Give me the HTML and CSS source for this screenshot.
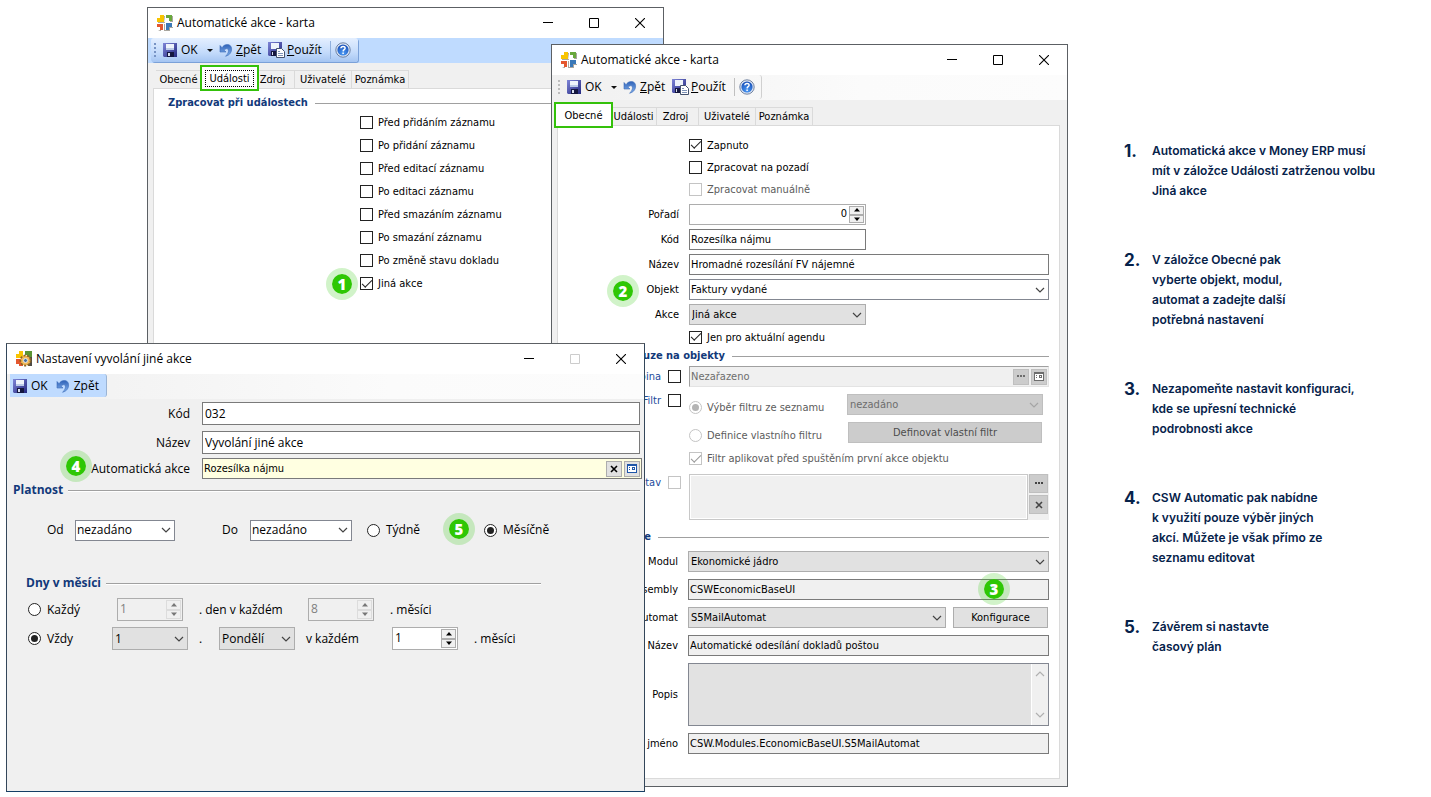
FILE: index.html
```html
<!DOCTYPE html>
<html lang="cs">
<head>
<meta charset="utf-8">
<title>Automatické akce</title>
<link rel="stylesheet" href="styles.css">
</head>
<body>
<svg class="defs" aria-hidden="true">
  <defs>
    <linearGradient id="gblue" x1="0" y1="0" x2="1" y2="1"><stop offset="0" stop-color="#7f86d8"/><stop offset="1" stop-color="#23277f"/></linearGradient>
    <linearGradient id="gundo" x1="0" y1="0" x2="0" y2="1"><stop offset="0" stop-color="#2f62b8"/><stop offset="1" stop-color="#86b4ee"/></linearGradient>
    <radialGradient id="ghelp" cx=".5" cy=".8" r=".8"><stop offset="0" stop-color="#4d9bf5"/><stop offset="1" stop-color="#154bb5"/></radialGradient>
    <symbol id="logo" viewBox="0 0 16 16">
      <path fill="#a9a69f" d="M7 1h1v6H1v1h7zM15 1h1v6h-3V6h2zM1 15h2v-1h1v2h3V9h1v7H3zM8 15h4v-3h4v1h-3v3H8z"/>
      <path fill="#f8c400" d="M3 0h4v7H0V3h3z"/><path fill="#69a83c" d="M9 0h6v6h-3V3H9z"/>
      <path fill="#e4572e" d="M0 9h6v6H3v-3H0z"/><path fill="#3a78b8" d="M9 8h6v4h-3v3H9z"/>
    </symbol>
    <symbol id="logogear" viewBox="0 0 16 16">
      <path fill="#f8c400" d="M3 0h4v7H0V3h3z"/><path fill="#5a9434" d="M9 0h7v8h-4V4H9z"/>
      <path fill="#e4572e" d="M0 8h7v7H3v-2H0z"/><path fill="#4d4a45" d="M12 6h4v9h-4z"/>
      <circle cx="9.500" cy="9.500" r="5" fill="#eeb04a" stroke="#8a6422" stroke-width="2" stroke-dasharray="2 1.500"/>
      <circle cx="9.500" cy="9.500" r="4" fill="#f1bb5d"/><circle cx="9.500" cy="9.500" r="2" fill="#4a6f9c" stroke="#dfe7ef"/>
    </symbol>
    <symbol id="save" viewBox="0 0 14 14">
      <path fill="url(#gblue)" d="M0 0h14v14H1l-1-1z"/><path fill="#eef3fb" d="M3 1h8v6H3z"/><path fill="#bccbe8" d="M3 5h8v2H3z"/>
      <path fill="#15173f" d="M4 9h7v5H4z"/><path fill="#d8def0" d="M5 10h2v3H5z"/>
    </symbol>
    <symbol id="apply" viewBox="0 0 17 16">
      <path fill="url(#gblue)" d="M0 0h14v14H1l-1-1z"/><path fill="#eef3fb" d="M3 1h8v6H3z"/><path fill="#15173f" d="M3 9h5v5H3z"/><path fill="#d8def0" d="M4 10h1v3H4z"/>
      <path fill="#fff" stroke="#44526e" d="M8.500 6.500h5l3 3v6h-8z"/><path stroke="#7f93b8" d="M10 9.500h2M10 11.500h5M10 13.500h5" fill="none"/>
    </symbol>
    <symbol id="undo" viewBox="0 0 14 14">
      <path fill="url(#gundo)" stroke="#3c6cb8" stroke-width=".6" d="M1 2.500V9h6L5.200 7.200C6.300 5.500 8.900 5 9.400 7.200c.4 2-.9 4.100-2.800 6.100 4.200-1.300 6-4 6-7.400C12.600 3.200 10.800 1.500 8.300 1.500 6 1.500 4.200 2.700 3.100 4.700z"/>
    </symbol>
    <symbol id="help" viewBox="0 0 16 16">
      <circle cx="8" cy="8" r="7.200" fill="#dce6f4" stroke="#56688c" stroke-width=".8"/><circle cx="8" cy="8" r="5.600" fill="url(#ghelp)"/>
      <path d="M5.900 6.300c.2-2.600 4.400-2.400 4.200 0C10 7.700 8.200 7.700 8.100 9.400M8.100 10.400v1.600" fill="none" stroke="#fff" stroke-width="1.500"/>
    </symbol>
    <symbol id="chev" viewBox="0 0 10 6"><path d="M1 1l4 4 4-4" fill="none" stroke="currentColor" stroke-width="1.200"/></symbol>
    <symbol id="tri" viewBox="0 0 6 4"><path d="M0 3.500L3 0l3 3.500z" fill="currentColor"/></symbol>
    <symbol id="cross" viewBox="0 0 8 8"><path d="M1 1l6 6M7 1L1 7" stroke="currentColor" stroke-width="1.600"/></symbol>
    <symbol id="dots" viewBox="0 0 10 3"><path d="M1 0h2v2H1zM4 0h2v2H4zM7 0h2v2H7z" fill="currentColor"/></symbol>
    <symbol id="card" viewBox="0 0 10 9"><path fill="currentColor" d="M0 0h10v9H0z"/><path fill="#fff" d="M1 2h8v6H1z"/><path fill="currentColor" d="M2 3h1v1H2zM2 5h1v1H2zM5 3h3v3H5z"/><path fill="#fff" d="M6 4h1v1H6z"/></symbol>
    <symbol id="min" viewBox="0 0 10 10"><path d="M0 4.500h10" stroke="currentColor"/></symbol>
    <symbol id="max" viewBox="0 0 10 10"><path d="M.5.5h9v9h-9z" fill="none" stroke="currentColor"/></symbol>
    <symbol id="close" viewBox="0 0 10 10"><path d="M0 0l10 10M10 0L0 10" stroke="currentColor" stroke-width="1.100"/></symbol>
  </defs>
</svg>
<div class="page">
  <main class="desktop">

    <section class="window window-events">
      <header class="titlebar">
        <svg class="i16"><use href="#logo"/></svg><h1>Automatické akce - karta</h1>
        <button class="sys" aria-label="Minimalizovat"><svg><use href="#min"/></svg></button>
        <button class="sys" aria-label="Maximalizovat"><svg><use href="#max"/></svg></button>
        <button class="sys" aria-label="Zavřít"><svg><use href="#close"/></svg></button>
      </header>
      <div class="toolbar toolbar-blue">
        <div class="tools">
          <i class="grip"></i>
          <button class="tool tool-ok"><svg class="i14"><use href="#save"/></svg>OK</button>
          <button class="drop" aria-label="Další možnosti"></button>
          <button class="tool tool-back"><svg class="i14"><use href="#undo"/></svg><span><u>Z</u>pět</span></button>
          <button class="tool tool-apply"><svg class="i17"><use href="#apply"/></svg><span><u>P</u>oužít</span></button>
          <i class="sep"></i>
          <button class="tool" aria-label="Nápověda"><svg class="i16"><use href="#help"/></svg></button>
        </div>
      </div>
      <nav class="tabs">
        <button class="tab tab-s">Obecné</button><button class="tab tab-on tab-focus"><span>Události</span></button><button class="tab tab-xs">Zdroj</button><button class="tab tab-m">Uživatelé</button><button class="tab tab-m">Poznámka</button>
      </nav>
      <div class="panel">
        <h2 class="group-title first"><span>Zpracovat při událostech</span></h2>
        <div class="events">
          <label class="check"><input type="checkbox">Před přidáním záznamu</label>
          <label class="check"><input type="checkbox">Po přidání záznamu</label>
          <label class="check"><input type="checkbox">Před editací záznamu</label>
          <label class="check"><input type="checkbox">Po editaci záznamu</label>
          <label class="check"><input type="checkbox">Před smazáním záznamu</label>
          <label class="check"><input type="checkbox">Po smazání záznamu</label>
          <label class="check"><input type="checkbox">Po změně stavu dokladu</label>
          <label class="check"><input type="checkbox" checked>Jiná akce</label>
        </div>
      </div>
    </section>

    <section class="window window-general">
      <header class="titlebar">
        <svg class="i16"><use href="#logo"/></svg><h1>Automatické akce - karta</h1>
        <button class="sys" aria-label="Minimalizovat"><svg><use href="#min"/></svg></button>
        <button class="sys" aria-label="Maximalizovat"><svg><use href="#max"/></svg></button>
        <button class="sys" aria-label="Zavřít"><svg><use href="#close"/></svg></button>
      </header>
      <div class="toolbar">
        <div class="tools">
          <i class="grip"></i>
          <button class="tool tool-ok"><svg class="i14"><use href="#save"/></svg>OK</button>
          <button class="drop" aria-label="Další možnosti"></button>
          <button class="tool tool-back"><svg class="i14"><use href="#undo"/></svg><span><u>Z</u>pět</span></button>
          <button class="tool tool-apply"><svg class="i17"><use href="#apply"/></svg><span><u>P</u>oužít</span></button>
          <i class="sep"></i>
          <button class="tool" aria-label="Nápověda"><svg class="i16"><use href="#help"/></svg></button>
        </div>
      </div>
      <nav class="tabs tabs-flush">
        <button class="tab tab-on"><span>Obecné</span></button><button class="tab tab-s">Události</button><button class="tab tab-z">Zdroj</button><button class="tab tab-m">Uživatelé</button><button class="tab tab-m">Poznámka</button>
      </nav>
      <div class="panel">
        <div class="flags">
          <label class="check"><input type="checkbox" checked>Zapnuto</label>
          <label class="check"><input type="checkbox">Zpracovat na pozadí</label>
          <label class="check"><input type="checkbox" disabled>Zpracovat manuálně</label>
        </div>
        <div class="form">
          <label class="name" for="order">Pořadí</label>
          <div class="spin narrow"><input id="order" class="num-right" value="0"><span class="updown"><button aria-label="Více"><svg><use href="#tri"/></svg></button><button aria-label="Méně"><svg><use href="#tri"/></svg></button></span></div>
          <label class="name" for="code">Kód</label><input id="code" class="field narrow" value="Rozesílka nájmu">
          <label class="name" for="title">Název</label><input id="title" class="field" value="Hromadné rozesílání FV nájemné">
          <label class="name" for="object">Objekt</label>
          <div class="combo white"><select id="object"><option>Faktury vydané</option></select><svg><use href="#chev"/></svg></div>
          <label class="name" for="action">Akce</label>
          <div class="combo narrow"><select id="action"><option>Jiná akce</option></select><svg><use href="#chev"/></svg></div>
        </div>
        <label class="check check-agenda"><input type="checkbox" checked>Jen pro aktuální agendu</label>
        <h2 class="group-title objects"><span>Omezit pouze na objekty</span></h2>
        <div class="form filter">
          <label class="name name-check">Skupina<input type="checkbox"></label>
          <div class="lookup off"><input aria-label="Skupina" value="Nezařazeno" disabled><button aria-label="Vybrat" disabled><svg class="i10"><use href="#dots"/></svg></button><button aria-label="Karta" disabled><svg class="i10"><use href="#card"/></svg></button></div>
          <label class="name name-check name-top">Filtr<input type="checkbox"></label>
          <div class="filter-body">
            <label class="check"><input type="radio" name="f" checked disabled>Výběr filtru ze seznamu</label>
            <div class="combo off"><select aria-label="Filtr" disabled><option>nezadáno</option></select><svg><use href="#chev"/></svg></div>
            <label class="check"><input type="radio" name="f" disabled>Definice vlastního filtru</label>
            <button class="push off" disabled>Definovat vlastní filtr</button>
            <label class="check wide"><input type="checkbox" checked disabled>Filtr aplikovat před spuštěním první akce objektu</label>
          </div>
          <label class="name name-check name-state">Stav<input type="checkbox" disabled></label>
          <div class="state"><textarea aria-label="Stav" disabled></textarea><span><button aria-label="Vybrat" disabled><svg class="i10"><use href="#dots"/></svg></button><button aria-label="Smazat" disabled><svg class="i8"><use href="#cross"/></svg></button></span></div>
        </div>
        <h2 class="group-title module"><span>Akce</span></h2>
        <div class="form module-form">
          <label class="name" for="module">Modul</label>
          <div class="combo"><select id="module"><option>Ekonomické jádro</option></select><svg><use href="#chev"/></svg></div>
          <label class="name" for="assembly">Assembly</label><input id="assembly" class="field grey" value="CSWEconomicBaseUI" readonly>
          <label class="name" for="automat">Automat</label>
          <div class="pair"><div class="combo"><select id="automat"><option>S5MailAutomat</option></select><svg><use href="#chev"/></svg></div><button class="push">Konfigurace</button></div>
          <label class="name" for="mname">Název</label><input id="mname" class="field grey" value="Automatické odesílání dokladů poštou" readonly>
          <label class="name" for="desc">Popis</label>
          <div class="memo"><textarea id="desc" readonly></textarea><span><svg class="up"><use href="#chev"/></svg><svg><use href="#chev"/></svg></span></div>
          <label class="name" for="full">Celé jméno</label><input id="full" class="field grey" value="CSW.Modules.EconomicBaseUI.S5MailAutomat" readonly>
        </div>
      </div>
    </section>

    <section class="window window-trigger">
      <header class="titlebar">
        <svg class="i16"><use href="#logogear"/></svg><h1>Nastavení vyvolání jiné akce</h1>
        <button class="sys" aria-label="Minimalizovat"><svg><use href="#min"/></svg></button>
        <button class="sys" aria-label="Maximalizovat" disabled><svg><use href="#max"/></svg></button>
        <button class="sys" aria-label="Zavřít"><svg><use href="#close"/></svg></button>
      </header>
      <div class="toolbar">
        <div class="tools tools-plain">
          <button class="tool"><svg class="i14"><use href="#save"/></svg>OK</button>
          <button class="tool"><svg class="i14"><use href="#undo"/></svg>Zpět</button>
        </div>
      </div>
      <div class="trigger-form">
        <label class="name" for="tcode">Kód</label><input id="tcode" class="field" value="032">
        <label class="name" for="tname">Název</label><input id="tname" class="field" value="Vyvolání jiné akce">
      </div>
      <div class="trigger-form trigger-action">
        <label class="name" for="tact">Automatická akce</label>
        <div class="lookup yellow"><input id="tact" value="Rozesílka nájmu"><button aria-label="Smazat"><svg class="i8"><use href="#cross"/></svg></button><button class="card" aria-label="Karta"><svg class="i10"><use href="#card"/></svg></button></div>
      </div>
      <h2 class="group-title validity"><span>Platnost</span></h2>
      <div class="range">
        <label for="from">Od</label><div class="combo white"><select id="from"><option>nezadáno</option></select><svg><use href="#chev"/></svg></div>
        <label for="to">Do</label><div class="combo white"><select id="to"><option>nezadáno</option></select><svg><use href="#chev"/></svg></div>
        <label class="check"><input type="radio" name="p">Týdně</label>
        <label class="check"><input type="radio" name="p" checked>Měsíčně</label>
      </div>
      <h2 class="group-title days"><span>Dny v měsíci</span></h2>
      <div class="schedule every">
        <label class="check"><input type="radio" name="d">Každý</label>
        <div class="spin off"><input aria-label="Den" value="1" disabled><span class="updown"><button aria-label="Více" disabled><svg><use href="#tri"/></svg></button><button aria-label="Méně" disabled><svg><use href="#tri"/></svg></button></span></div>
        <span>. den v každém</span>
        <div class="spin off"><input aria-label="Měsíc" value="8" disabled><span class="updown"><button aria-label="Více" disabled><svg><use href="#tri"/></svg></button><button aria-label="Méně" disabled><svg><use href="#tri"/></svg></button></span></div>
        <span>. měsíci</span>
      </div>
      <div class="schedule always">
        <label class="check"><input type="radio" name="d" checked>Vždy</label>
        <div class="combo"><select aria-label="Pořadí dne"><option>1</option></select><svg><use href="#chev"/></svg></div>
        <span>.</span>
        <div class="combo"><select aria-label="Den v týdnu"><option>Pondělí</option></select><svg><use href="#chev"/></svg></div>
        <span>v každém</span>
        <div class="spin"><input aria-label="Počet měsíců" value="1"><span class="updown"><button aria-label="Více"><svg><use href="#tri"/></svg></button><button aria-label="Méně"><svg><use href="#tri"/></svg></button></span></div>
        <span>. měsíci</span>
      </div>
    </section>

    <b class="badge badge-1">1</b>
    <b class="badge badge-2">2</b>
    <b class="badge badge-3">3</b>
    <b class="badge badge-4">4</b>
    <b class="badge badge-5">5</b>
  </main>

  <aside class="notes">
    <div class="note"><b>1.</b><p>Automatická akce v Money ERP musí<br>mít v záložce Události zatrženou volbu<br>Jiná akce</p></div>
    <div class="note"><b>2.</b><p>V záložce Obecné pak<br>vyberte objekt, modul,<br>automat a zadejte další<br>potřebná nastavení</p></div>
    <div class="note"><b>3.</b><p>Nezapomeňte nastavit konfiguraci,<br>kde se upřesní technické<br>podrobnosti akce</p></div>
    <div class="note"><b>4.</b><p>CSW Automatic pak nabídne<br>k využití pouze výběr jiných<br>akcí. Můžete je však přímo ze<br>seznamu editovat</p></div>
    <div class="note"><b>5.</b><p>Závěrem si nastavte<br>časový plán</p></div>
  </aside>
</div>
</body>
</html>
```
FILE: styles.css
```css
* { box-sizing: border-box; }
body { margin: 0; background: #fff; color: #000; font: 11px/15px "DejaVu Sans Condensed", "Noto Sans", sans-serif; }
button, input, select, textarea { font: inherit; color: inherit; margin: 0; padding: 0; border-radius: 0; outline: 0; min-width: 0; }
button { background: none; border: 0; white-space: nowrap; }
textarea { resize: none; display: block; }
h1, h2, p { margin: 0; }
svg { display: block; flex: none; }
.defs { position: absolute; width: 0; height: 0; }
.i8 { width: 8px; height: 8px; }
.i10 { width: 10px; height: 9px; }
.i14 { width: 14px; height: 14px; }
.i16 { width: 16px; height: 16px; }
.i17 { width: 17px; height: 16px; }

.page { display: flex; min-height: 100vh; }
.desktop { flex: 1; position: relative; }
.notes { width: 307px; padding-top: 141px; display: flex; flex-direction: column; gap: 49px; color: #06224a; font: 600 12px/20px Inter, sans-serif; }
.note { display: flex; white-space: nowrap; }
.note b { width: 28px; font-size: 17px; font-weight: 700; }

/* windows */
.window { position: absolute; display: flex; flex-direction: column; background: #f0f0f0; border: 1px solid #5c6064; }
.window-events { left: 147px; top: 7px; width: 517px; height: 400px; }
.window-general { left: 551px; top: 44px; width: 517px; height: 743px; }
.window-trigger { left: 6px; top: 343px; width: 639px; height: 449px; border-color: #5c6064 #33465a #153f66 #33465a; font: 12px/16px "Open Sans", sans-serif; }
.titlebar { height: 30px; display: flex; align-items: center; padding-left: 9px; background: #fff; font-family: "Open Sans", sans-serif; }
.titlebar h1 { flex: 1; margin-left: 4px; font-size: 12px; font-weight: 400; line-height: 16px; }
.sys { width: 46px; height: 28px; display: grid; place-items: center; }
.sys svg { width: 10px; height: 10px; }
.sys:disabled { color: #ccc; }

.toolbar { height: 25px; padding-left: 3px; background: linear-gradient(90deg, #f0f0f0, #fbfbfb 60%, #fcfcfc); font: 12px/16px "Open Sans", sans-serif; }
.toolbar-blue { background: #bfdbff; }
.tools { width: 207px; height: 24px; display: flex; align-items: center; padding-left: 3px; border-radius: 0 3px 3px 0; border-right: 1px solid #d0d0d0; }
.toolbar-blue .tools { background: linear-gradient(#e4efff, #c4dbfb 60%, #a5c5f2); border: 0; box-shadow: 1px 1px 0 #7ba1d8; border-radius: 3px; }
.grip { width: 2px; height: 15px; margin-right: 7px; background: repeating-linear-gradient(#bdbdbd 0 2px, transparent 2px 4px); }
.toolbar-blue .grip { background: repeating-linear-gradient(#7793c4 0 2px, transparent 2px 4px); }
.tool { display: flex; align-items: center; gap: 4px; }
.tool-ok { width: 44px; }
.drop { width: 5px; height: 3px; margin-right: 6px; border: solid transparent; border-width: 3px 3px 0; border-top-color: #111; }
.tool-back { width: 49px; gap: 3px; }
.tool-apply { width: 62px; gap: 2px; }
.sep { width: 1px; height: 18px; margin-right: 4px; background: #c0c0c0; }
.toolbar-blue .sep { background: #8fb0de; }
.tools-plain { width: 97px; height: 23px; padding-left: 3px; gap: 8px; background: #bfdbff; border-right-color: #9bb4d4; }

/* tabs */
.tabs { height: 25px; padding-left: 8px; display: flex; align-items: flex-end; }
.tabs-flush { padding-left: 4px; }
.tab { height: 18px; border: 1px solid #dadada; border-width: 1px 1px 0 0; }
.tab-xs { width: 38px; padding-right: 6px; }
.tab-z { width: 42px; padding-right: 4px; }
.tab-s { width: 46px; }
.tab-m { width: 57px; }
.tab-on { position: relative; z-index: 1; width: 55px; height: 22px; margin-bottom: -1px; border: 0; background: #fff; outline: 2px solid #34c10a; }
.tab-focus { width: 55px; }
.tab-focus span { display: block; margin: 1px 3px; border: 1px dotted #000; line-height: 15px; }
.panel { flex: 1; margin: 0 7px 7px 5px; border: 1px solid #dadada; background: #fff; }

/* headings with rule */
.group-title { display: flex; align-items: center; gap: 7px; color: #12397a; font: 700 11px/14px "DejaVu Sans Condensed", sans-serif; white-space: nowrap; }
.group-title::after { content: ""; flex: 1; height: 1px; background: #a0a0a0; }
.first { padding: 7px 0 0 14px; }
.objects { margin-right: 10px; }
.objects span { width: 167px; text-align: right; }
.module { margin: 10px 10px 0 0; }
.module span { width: 93px; text-align: right; }

/* check boxes, radios */
.check { display: flex; align-items: center; gap: 5px; white-space: nowrap; }
input[type=checkbox], input[type=radio] { appearance: none; flex: none; width: 13px; height: 13px; border: 1px solid #222; background: #fff; display: grid; place-items: center; }
input[type=radio] { border-radius: 50%; }
input[type=checkbox]:checked::before { content: ""; width: 9px; height: 4px; margin-bottom: 3px; border: solid #222; border-width: 0 0 1px 1px; transform: rotate(-45deg); }
input[type=radio]:checked::before { content: ""; width: 7px; height: 7px; border-radius: 50%; background: #222; }
input[type=checkbox]:disabled, input[type=radio]:disabled { border-color: #c4c4c4; }
input[type=checkbox]:disabled::before { border-color: #999; }
input[type=radio]:disabled::before { background: #b4b4b4; }
.check:has(input:disabled) { color: #5c5c5c; }
.events { padding: 1px 0 0 206px; }
.events .check { height: 23px; }
.flags { padding: 8px 0 4px 131px; }
.flags .check { height: 22px; }
.check-agenda { height: 24px; padding-left: 131px; }

/* form controls */
.form { display: grid; grid-template-columns: 121px 1fr; column-gap: 10px; row-gap: 4px; margin-right: 10px; }
.name { align-self: center; text-align: right; white-space: nowrap; }
.field { width: 100%; height: 21px; padding: 0 1px 1px; border: 1px solid #7a7a7a; background: #fff; }
.grey { background: #f0f0f0; }
.narrow { width: 177px; }
.combo { position: relative; height: 21px; color: #000; }
.combo select { appearance: none; width: 100%; height: 100%; padding: 0 20px 0 2px; border: 1px solid #adadad; background: #e1e1e1; opacity: 1; }
.combo svg { position: absolute; right: 4px; top: 50%; width: 10px; height: 6px; margin-top: -3px; color: #444; pointer-events: none; }
.combo.white select { padding-left: 1px; background: #fff; border-color: #838791; }
.combo.off select { color: #6d6d6d; background: #ccc; border-color: #bfbfbf; }
.combo.off svg { color: #a5a5a5; }
.spin { display: flex; height: 21px; padding: 1px; border: 1px solid #adadad; background: #fff; }
.spin input { flex: 1; border: 0; padding: 0 2px 2px 1px; background: none; }
.num-right { text-align: right; }
.updown { width: 15px; display: flex; flex-direction: column; }
.updown button { flex: 1; display: grid; place-items: center; border: 1px solid #adadad; background: #f0f0f0; }
.updown svg { width: 6px; height: 4px; }
.updown button:last-child svg { transform: rotate(180deg); }
.spin.off { color: #808080; background: #f0f0f0; }
.spin.off button { border-color: #dcdcdc; color: #777; }
.push { height: 21px; border: 1px solid #adadad; background: #e1e1e1; }
.push.off { color: #4d4d4d; background: #ccc; border-color: #bfbfbf; margin: 0 1px; }
.lookup { display: flex; align-items: center; gap: 2px; height: 21px; padding-right: 1px; border: 1px solid #7a7a7a; }
.lookup input { flex: 1; height: 17px; padding: 0 1px; border: 0; background: none; }
.lookup button { width: 16px; height: 16px; display: grid; place-items: center; border: 1px solid #adadad; background: #e1e1e1; }
.lookup.off { color: #6d6d6d; background: #f0f0f0; border-color: #a0a0a0 #e3e3e3 #e3e3e3 #a0a0a0; }
.lookup.off button { background: #ccc; border-color: #bfbfbf; }
.yellow { background: #ffffe1; font: 11px/15px "DejaVu Sans Condensed", sans-serif; }
.yellow .card { color: #1f56a8; }

.filter { margin-top: 3px; row-gap: 0; }
.name-check { display: flex; justify-content: flex-end; align-items: center; gap: 7px; margin-right: -2px; color: #1c4c9c; }
.name-top { align-self: start; padding-top: 6px; }
.name-state { align-self: start; padding-top: 1px; }
.filter-body { display: grid; grid-template-columns: 1fr 196px; grid-template-rows: 21px 21px; row-gap: 7px; margin-right: 6px; padding-top: 7px; }
.filter-body .check { padding-top: 5px; }
.filter-body .wide { grid-column: 1 / 3; height: 31px; margin-top: -7px; padding: 0; }
.state { display: flex; height: 46px; background: #f0f0f0; }
.state textarea { flex: 1; height: 46px; border: 1px solid #c8c8c8; background: #f0f0f0; box-shadow: inset 0 0 0 1px #fff; }
.state span { width: 21px; display: flex; flex-direction: column; gap: 2px; padding-left: 1px; }
.state button { width: 19px; height: 19px; display: grid; place-items: center; color: #444; border: 1px solid #bfbfbf; background: #ccc; }
.module-form { grid-template-columns: 120px 1fr; margin-top: 7px; row-gap: 7px; }
.pair { display: grid; grid-template-columns: 1fr 95px; column-gap: 7px; margin-right: 1px; }
.memo { display: flex; height: 63px; border: 1px solid #838791; background: #e2e2e2; }
.memo textarea { flex: 1; border: 0; background: none; }
.memo span { width: 17px; padding: 7px 0; display: flex; flex-direction: column; justify-content: space-between; align-items: center; background: #f0f0f0; border-left: 1px solid #fff; color: #b0b0b0; }
.memo svg { width: 10px; height: 6px; }
.up { transform: rotate(180deg); }

/* trigger window */
.trigger-form { display: grid; grid-template-columns: 183px 1fr; column-gap: 12px; row-gap: 6px; margin: 3px 4px 0 0; }
.trigger-form .field { height: 23px; padding-left: 2px; }
.trigger-action { margin: 4px 2px 0 0; }
.window-trigger .group-title { gap: 5px; font: 700 12px/16px "Open Sans", sans-serif; }
.window-trigger .group-title::after { box-shadow: 0 1px 0 #fff; }
.validity { margin: 3px 4px 0 6px; }
.range { height: 62px; margin-top: 1px; padding-left: 40px; display: grid; grid-template-columns: 28px 100px 75px 102px 132px 1fr; align-items: center; }
.range label[for=to] { text-align: right; padding-right: 12px; }
.range .check { padding-left: 15px; }
.range .check:last-child { padding-left: 0; }
.window-trigger .check { gap: 6px; }
.days { margin: 14px 103px 0 19px; }
.schedule { display: grid; align-items: center; margin-left: 21px; white-space: nowrap; }
.schedule .combo, .schedule .spin { height: 23px; }
.every { margin-top: 7px; grid-template-columns: 89px 66px 16px 109px 66px 16px 1fr; }
.every > :nth-child(3) { grid-column: 4; }
.every > :nth-child(5) { grid-column: 7; }
.always { margin-top: 6px; grid-template-columns: 84px 76px 11px 20px 76px 11px 86px 66px 16px 1fr; }
.always > :nth-child(3) { grid-column: 4; }
.always > :nth-child(5) { grid-column: 7; }
.always > :nth-child(7) { grid-column: 10; }

/* numbered markers */
.badge { position: absolute; width: 32px; height: 32px; border: 6px solid rgba(45, 200, 10, .22); border-radius: 50%; background: #2ec704; background-clip: padding-box; color: #fff; text-align: center; font: 800 15px/20px "Open Sans", sans-serif; }
.badge-1 { left: 326px; top: 268px; }
.badge-2 { left: 607px; top: 275px; }
.badge-3 { left: 978px; top: 573px; }
.badge-4 { left: 60px; top: 450px; }
.badge-5 { left: 443px; top: 513px; }
```
